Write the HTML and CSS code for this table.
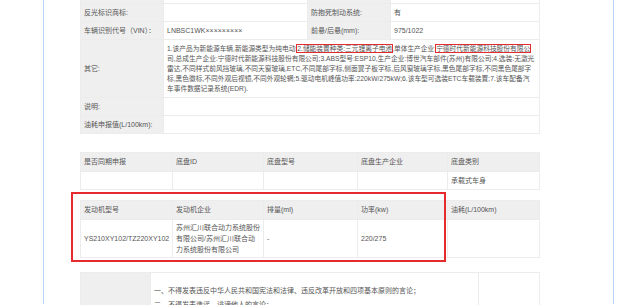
FILE: index.html
```html
<!DOCTYPE html>
<html lang="zh-CN">
<head>
<meta charset="utf-8">
<title>车辆参数</title>
<link rel="stylesheet" href="styles.css">
</head>
<body>
<div class="frame">
  <table class="grid info">
    <colgroup><col class="c83"><col class="c144"><col class="c83"><col></colgroup>
    <tr class="stub"><td class="lab"></td><td></td><td class="lab"></td><td></td></tr>
    <tr><td class="lab">反光标识商标:</td><td></td><td class="lab">防抱死制动系统:</td><td>有</td></tr>
    <tr><td class="lab">车辆识别代号（VIN）：</td><td>LNBSC1WK×××××××××</td><td class="lab">前悬/后悬(mm):</td><td>975/1022</td></tr>
    <tr class="multi"><td class="lab">其它:</td><td colspan="3" class="long">1.该产品为新能源车辆,新能源类型为纯电动;<span class="mark">2.储能装置种类:三元锂离子电池</span>,单体生产企业:<span class="mark">宁德时代新能源科技股份有限公</span><br>司,总成生产企业:宁德时代新能源科技股份有限公司;3.ABS型号:ESP10,生产企业:博世汽车部件(苏州)有限公司;4.选装:无激光<br>雷达,不同样式前风挡玻璃,不同天窗玻璃,ETC,不同尾部字标,侧面翼子板字标,后风窗玻璃字标,黑色尾部字标,不同黑色尾部字<br>标,黑色徽标,不同外观后视镜,不同外观轮辋;5.驱动电机峰值功率:220kW/275kW;6.该车型可选装ETC车载装置;7.该车配备汽<br>车事件数据记录系统(EDR).</td></tr>
    <tr><td class="lab">说明:</td><td colspan="3"></td></tr>
    <tr><td class="lab">油耗申报值(L/100km):</td><td colspan="3"></td></tr>
  </table>

  <table class="grid five chassis">
    <colgroup><col class="c92"><col class="c91"><col class="c94"><col class="c90"><col></colgroup>
    <tr class="head"><td>是否同期申报</td><td>底盘ID</td><td>底盘型号</td><td>底盘生产企业</td><td>底盘类别</td></tr>
    <tr><td></td><td></td><td></td><td></td><td>承载式车身</td></tr>
  </table>

  <div class="engine-wrap">
    <table class="grid five engine">
      <colgroup><col class="c92"><col class="c91"><col class="c94"><col class="c90"><col></colgroup>
      <tr class="head"><td>发动机型号</td><td>发动机企业</td><td>排量(ml)</td><td>功率(kw)</td><td>油耗(L/100km)</td></tr>
      <tr class="tall"><td class="nowrap">YS210XY102/TZ220XY102</td><td>苏州汇川联合动力系统股份有限公司/苏州汇川联合动力系统股份有限公司</td><td>-</td><td>220/275</td><td></td></tr>
    </table>
    <div class="redbox"></div>
  </div>

  <table class="grid notice">
    <colgroup><col class="c70"><col class="c328"><col></colgroup>
    <tr><td class="lab"></td><td class="rules"><p>一、不得发表违反中华人民共和国宪法和法律、违反改革开放和四项基本原则的言论；</p><p>二、不得发表造谣、诽谤他人的言论；</p></td><td></td></tr>
  </table>
</div>
</body>
</html>
```

FILE: styles.css
```css
html, body {
  margin: 0;
  padding: 0;
  background: #ffffff;
  overflow: hidden;
}

body {
  width: 620px;
  height: 305px;
  font-family: "Liberation Sans", "Noto Sans CJK SC", "Microsoft YaHei", sans-serif;
  font-size: 7px;
  color: #555555;
}

.frame {
  margin-left: 43px;
  width: 533px;
  height: 305px;
  border-left: 1px solid #b8d2f2;
  border-right: 1px solid #b8d2f2;
  padding-left: 36px;
  box-sizing: content-box;
}

.grid {
  width: 460px;
  border-collapse: collapse;
  table-layout: fixed;
  border: 1px solid #ececec;
}

.grid td {
  border: 1px solid #ececec;
  padding: 0 3px;
  height: 17px;
  line-height: 10px;
  vertical-align: middle;
  white-space: normal;
  word-break: break-all;
}

.grid td.nowrap {
  white-space: nowrap;
  padding-right: 0;
}

.c83 { width: 83px; }
.c144 { width: 144px; }
.c92 { width: 92px; }
.c91 { width: 91px; }
.c94 { width: 94px; }
.c90 { width: 90px; }
.c70 { width: 70px; }
.c328 { width: 328px; }

.info {
  margin-top: -1px;
}

.info .stub td {
  height: 3px;
  padding: 0;
}

.lab {
  background: #efefef;
}

.info .multi td {
  height: 52px;
  padding-top: 3px;
  padding-bottom: 2px;
}

.info .long {
  font-size: 6.72px;
  white-space: nowrap;
  overflow: hidden;
}

.mark {
  outline: 1.5px solid #e52b2e;
}

.chassis {
  margin-top: 18px;
}

.head td {
  background: #efefef;
  height: 18px;
}

.engine-wrap {
  position: relative;
  margin-top: 10px;
}

.engine .tall td {
  height: 35px;
  line-height: 11px;
  padding-top: 1px;
  padding-bottom: 1px;
}

.redbox {
  position: absolute;
  left: -9px;
  top: -8px;
  width: 371px;
  height: 66px;
  border: 2px solid #e52b2e;
}

.notice {
  margin-top: 14px;
}

.notice td {
  height: 60px;
  vertical-align: top;
}

.rules {
  padding-top: 11px !important;
}

.rules p {
  margin: 0;
  line-height: 14px;
}
```
